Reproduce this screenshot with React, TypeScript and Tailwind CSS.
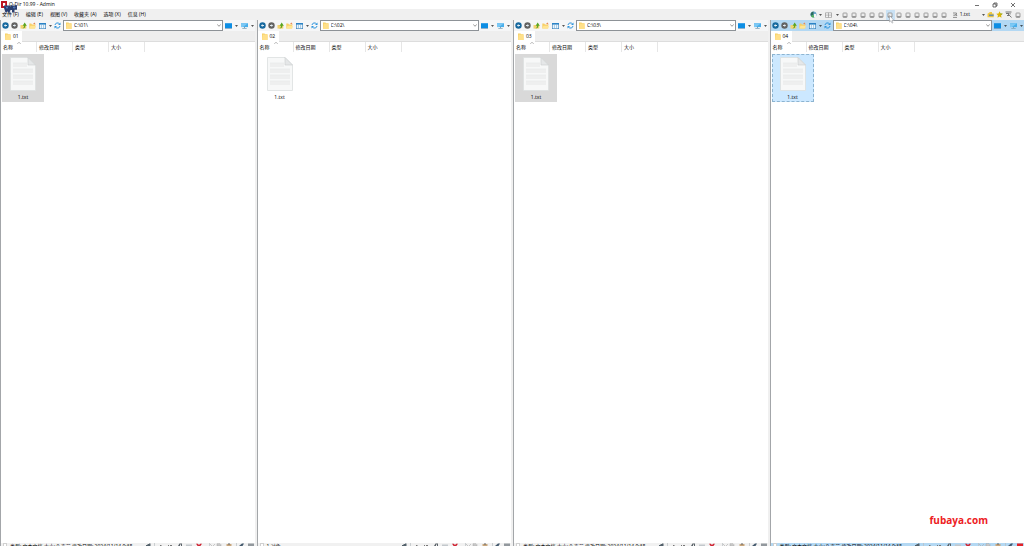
import React from "react";
import clsx from "clsx";

type PaneData = {
    name: string;
    selection: "inactive" | "none" | "active";
    status: string;
};

const panes: PaneData[] = [
    { name: "01", selection: "inactive", status: "类型: 文本文档 大小: 0 字节 修改日期: 2024/11/14 9:38" },
    { name: "02", selection: "none", status: "1 对象" },
    { name: "03", selection: "inactive", status: "类型: 文本文档 大小: 0 字节 修改日期: 2024/11/14 9:38" },
    { name: "04", selection: "active", status: "类型: 文本文档 大小: 0 字节 修改日期: 2024/11/14 9:38" },
];

const menus = ["文件 (F)", "编辑 (E)", "视图 (V)", "收藏夹 (A)", "选项 (X)", "信息 (H)"];

const Caret = () => (
    <svg viewBox="0 0 4 2" className="w-[3px] h-[2px] shrink-0">
        <path d="M0 0h4L2 2z" fill="#222" />
    </svg>
);

const Folder = ({ className }: { className?: string }) => (
    <svg viewBox="0 0 6 7" className={clsx("w-[6px] h-[7px] shrink-0", className)}>
        <path d="M0 0.5h2.5l.6.8H5.5V7H0z" fill="#f5cf62" />
        <path d="M.6 1.6H5.5V7H0z" fill="#ffe08a" />
    </svg>
);

const Arrow = ({ color, flip }: { color: string; flip?: boolean }) => (
    <svg viewBox="0 0 7 7" className={clsx("w-[7px] h-[7px]", flip && "-scale-x-100")}>
        <circle cx="3.5" cy="3.5" r="3.2" fill={color} />
        <path d="M1.9 3.5L3.6 2.1V3H5V4H3.6V4.9z" fill="#e2ecf3" />
    </svg>
);

const UpIcon = () => (
    <svg viewBox="0 0 7 7" className="w-[7px] h-[7px]">
        <path d="M.5 3h5.8v3.6H.5z" fill="#f3d370" />
        <path d="M2 6.2c1.7-.3 2-1 2-2.5H2.6L4.7.6l2.1 3.1H5.3c0 2-1 2.8-3.3 2.5z" fill="#5aa522" />
    </svg>
);

const FavIcon = () => (
    <svg viewBox="0 0 7 7" className="w-[7px] h-[7px]">
        <path d="M.3 1.6h2l.6.8h3.3v4H.3z" fill="#f8cf66" />
        <path d="M1.5 3.7H7L5.9 6.4H.3z" fill="#ffe594" />
        <path d="M4 1.8L5.7.6l.9 1.8z" fill="#e88a57" />
    </svg>
);

const ViewIcon = () => (
    <svg viewBox="0 0 7 6" className="w-[7px] h-[6px]">
        <rect x=".3" y=".3" width="6.4" height="5.4" fill="#f3f9fd" stroke="#2f7dbb" strokeWidth=".6" />
        <path d="M0 0h7v1.6H0z" fill="#2b83c6" />
        <path d="M2.4 1.5v4.2M4.6 1.5v4.2" stroke="#6ba7d3" strokeWidth=".6" />
    </svg>
);

const RefreshIcon = () => (
    <svg viewBox="0 0 7 7" className="w-[7px] h-[7px]">
        <path d="M1 3C1.3.7 4.2.3 5.5 1.8M6 4C5.7 6.3 2.8 6.7 1.5 5.2" fill="none" stroke="#2d94dc" strokeWidth="1" />
        <path d="M6.5.5v2.6H4zM.5 6.5V3.9H3z" fill="#2d94dc" />
    </svg>
);

const Monitor = ({ stand }: { stand?: boolean }) => (
    <svg viewBox="0 0 7 6" className="w-[7px] h-[6px]">
        <path d={stand ? "M0 .2h7v3.9H0z" : "M0 .2h7V5H0z"} fill={stand ? "#48aeea" : "#0d8ee4"} />
        {stand && <path d="M0 .2h7L2 4.1H0z" fill="#7cc8f4" />}
        <path d={stand ? "M1.3 5h4.4v.8H1.3zM3 4h1v1H3z" : "M0 5h7v.5H0z"} fill={stand ? "#7da2b8" : "#2a6fa4"} />
    </svg>
);

const TextFile = () => (
    <svg viewBox="0 0 26 34" className="w-[26px] h-[34px] shrink-0">
        <path d="M.5.5H18L25.5 8V33.5H.5z" fill="#f7f8f8" stroke="#dcdfe0" strokeWidth=".8" />
        <path d="M3 6h14v4H3zM3 12h20v4H3zM3 18h20v4H3zM3 24h20v4H3z" fill="#eeefef" />
        <path d="M3 6h14M3 12h20M3 18h20M3 24h20" stroke="#e6e8e8" strokeWidth=".6" />
        <path d="M18 .5V8h7.5z" fill="#e5e7e8" stroke="#c9cdce" strokeWidth=".6" />
    </svg>
);

const Disk = () => (
    <svg viewBox="0 0 6 6" className="w-[6px] h-[6px]">
        <rect x="1" y="1" width="4" height="4.4" rx=".6" fill="#ececec" stroke="#8b8b8b" strokeWidth=".8" />
        <path d="M1.2 4.2h3.6v1H1.2z" fill="#858585" />
    </svg>
);

const TopTools = () => (
    <div className="flex items-center text-[5px] pr-[2px]">
        <button aria-label="Colors" className="w-[10px] flex justify-center">
            <svg viewBox="0 0 7 7" className="w-[7px] h-[7px]">
                <circle cx="3.5" cy="3.5" r="3" fill="#6fa7cc" />
                <path d="M3.5 3.5V.5A3 3 0 0 0 1 5z" fill="#2a6a5d" />
                <path d="M3.5 3.5L1 5.2a3 3 0 0 0 3 1.3z" fill="#4db352" />
                <path d="M4 3h2v3H4z" fill="#f5f5f5" />
            </svg>
        </button>
        <Caret />
        <button aria-label="Layout" className="w-[14px] flex justify-center">
            <svg viewBox="0 0 7 6" className="w-[7px] h-[6px]">
                <path d="M.5.8h6v4.6h-6zM3.5.8v4.6M.5 3.1h6" fill="#fafafa" stroke="#858585" strokeWidth=".6" />
            </svg>
        </button>
        <Caret />
        <div className="flex pl-[2px]">
            {Array.from({ length: 12 }, (_, i) => (
                <button
                    key={i}
                    aria-label={`Drive ${i + 1}`}
                    className={clsx("relative w-[9px] h-[10px] flex items-center justify-center", i === 5 && "bg-[#c9e1f4]")}
                >
                    <Disk />
                    {i === 5 && (
                        <svg viewBox="0 0 6 9" className="absolute left-[3px] top-[5px] z-10 w-[6px] h-[9px]">
                            <path d="M.5.5V7L2 5.7l1 2.4 1-.5-1-2.2h2z" fill="#fff" stroke="#8b8f95" strokeWidth=".5" />
                        </svg>
                    )}
                </button>
            ))}
        </div>
        <button className="flex items-center gap-[2px] pl-[3px]">
            <svg viewBox="0 0 6 6" className="w-[6px] h-[6px]">
                <path d="M1 1h3.5v1.6H2.8V4M1 5.4h4M1.2 3.2h1M3.8 3.5h1.4" fill="none" stroke="#666" strokeWidth=".7" />
            </svg>
            1.txt
        </button>
        <span className="pl-[12px] pr-px">
            <Caret />
        </span>
        <button aria-label="Open folder" className="w-[9px] flex justify-center">
            <svg viewBox="0 0 7 7" className="w-[7px] h-[7px]">
                <path d="M.5 2.7L3 1h2v1.5h1.7v3.7H.5z" fill="#f0c83f" />
                <path d="M2 3.5h4.6v1.6H2z" fill="#698ea6" />
            </svg>
        </button>
        <button aria-label="Favorites" className="w-[9px] flex justify-center">
            <svg viewBox="0 0 7 7" className="w-[7px] h-[7px]">
                <path d="M3.5.3l1 2.1 2.3.3-1.7 1.6.4 2.4-2-1.2-2 1.2.4-2.4L.2 2.7l2.3-.3z" fill="#dfb500" />
                <path d="M3.5.3l1 2.1 2.3.3-2 1z" fill="#6da32e" />
            </svg>
        </button>
        <button aria-label="Tools" className="w-[9px] flex justify-center">
            <svg viewBox="0 0 7 7" className="w-[7px] h-[7px]">
                <path d="M.5 1h6M1 2.5h3M3 3l3.5 3.4M2 4.5h2M5 2v1.5" stroke="#555" strokeWidth=".8" />
            </svg>
        </button>
        <button aria-label="Window" className="w-[9px] flex justify-center">
            <Disk />
        </button>
    </div>
);

const StatusIcons = ({ active }: { active: boolean }) => (
    <svg viewBox="0 0 110 3" className="w-[110px] h-[3px] shrink-0">
        <path d="M1 2h1.5V1H4V.4h1.5V3H1z" fill="#53616b" />
        <path d="M9.5 0v3M64.5 0v3M91.5 0v3" stroke="#b9bec2" strokeWidth=".7" />
        <path d="M15 2h1.5v1H15zM23 2h1v1h-1zM25 2h2v1h-2z" fill="#777" />
        <path d="M33 3L34.5.6H37V3h-1V1.5h-1V3z" fill="#5c646a" />
        <path d="M41 1.5h6V3h-6z" fill="#c3c8cc" />
        <path d="M51 .7h1.8L54 2l1.2-1.3H57L55.4 3h-2.8z" fill="#cf2433" />
        <path d="M65 1l2 2M70 1l-2 2" stroke="#aaa" strokeWidth=".6" />
        <path d="M72 .7h3l1 1V3h-4z" fill="#ccc" stroke="#999" strokeWidth=".4" />
        <path d="M81.5 1h5v2h-5z" fill="#c8a67c" />
        <path d="M83 .5h2v1h-2z" fill="#666" />
        <path d="M94 3l3-2.5h2L97.5 3z" fill="#43596d" />
        <path d="M103 .5h6V3h-6z" fill={active ? "#e32227" : "#92989d"} />
    </svg>
);

const Pane = ({ pane }: { pane: PaneData }) => {
    const active = pane.selection === "active";

    return (
        <section className="flex flex-col min-w-0 min-h-0 bg-white border-l border-[#a3a6a9]">
            <div className={clsx("flex items-center h-[11px] shrink-0", active ? "bg-[#b3d8f3]" : "bg-[#f5f6f7]")}>
                <div className="flex items-center gap-[2px] w-[62px] pl-px shrink-0">
                    <button aria-label="Back"><Arrow color="#17699f" /></button>
                    <button aria-label="Forward"><Arrow color="#636363" flip /></button>
                    <button aria-label="Up"><UpIcon /></button>
                    <button aria-label="Favorites"><FavIcon /></button>
                    <button aria-label="View" className="flex items-center gap-[3px] pl-px">
                        <ViewIcon />
                        <Caret />
                    </button>
                    <button aria-label="Refresh"><RefreshIcon /></button>
                </div>
                <label className="flex items-center flex-1 min-w-0 h-[11px] pl-[2px] pr-px gap-[2px] bg-white border border-[#8d9297]">
                    <Folder />
                    <input
                        aria-label="Address"
                        defaultValue={`C:\\${pane.name}\\`}
                        className="flex-1 min-w-0 h-[9px] leading-[9px] text-[5px] outline-none"
                    />
                    <svg viewBox="0 0 4 3" className="w-[4px] h-[3px]">
                        <path d="M.3.4L2 2.3 3.7.4" fill="none" stroke="#555" strokeWidth=".6" />
                    </svg>
                </label>
                <div className="flex items-center gap-[3px] pl-[2px] pr-px">
                    <button aria-label="Desktop" className="flex items-center gap-[3px]"><Monitor /><Caret /></button>
                    <button aria-label="Computer" className="flex items-center gap-[3px]"><Monitor stand /><Caret /></button>
                </div>
            </div>

            <div className="h-[11px] shrink-0 flex bg-[#eeeeee] border-b border-[#dddddd]">
                <button className="flex items-center gap-[2px] h-[11px] w-[21px] pl-[4px] bg-white">
                    <Folder />
                    {pane.name}
                </button>
            </div>

            <div className="relative flex h-[10px] shrink-0 leading-[10px]">
                {["名称", "修改日期", "类型", "大小"].map((title) => (
                    <div key={title} className="w-[36px] pl-[2px] border-r border-[#e6e6e6] whitespace-nowrap">
                        {title}
                    </div>
                ))}
                <svg viewBox="0 0 4 2" className="absolute left-[16px] top-0 w-[4px] h-[2px]">
                    <path d="M.2 1.8L2 .3l1.8 1.5" fill="none" stroke="#777" strokeWidth=".5" />
                </svg>
            </div>

            <div className="flex-1 min-h-0 pt-[2px] pl-px">
                <button
                    className={clsx(
                        "flex flex-col items-center gap-[2px] w-[42px] h-[48px] pt-[2px] border",
                        pane.selection === "inactive" && "bg-[#d9d9d9] border-[#d9d9d9]",
                        pane.selection === "none" && "border-transparent",
                        active && "bg-[#cce8ff] border-dashed border-[#8db4d0]"
                    )}
                >
                    <TextFile />
                    <span className="leading-[9px]">1.txt</span>
                </button>
            </div>

            {/* only the top edge of the status bar stays inside the window */}
            <footer className={clsx("flex justify-between h-[3px] shrink-0 overflow-hidden", active ? "bg-[#b3d8f3]" : "bg-[#f1f1f1]")}>
                <div className="flex gap-[3px] pl-[2px]">
                    <span className="w-[4px] h-[5px] border border-[#d0d0d0] bg-white" />
                    <span className="leading-[7px] whitespace-nowrap">{pane.status}</span>
                </div>
                <StatusIcons active={active} />
            </footer>
        </section>
    );
};

export default function App() {
    return (
        <div className="relative flex flex-col h-screen overflow-hidden bg-white text-[5px] leading-[9px] text-black font-['Open_Sans','Noto_Sans_CJK_SC',sans-serif]">
            <header className="flex justify-between h-[9px] shrink-0">
                <div className="relative flex items-center gap-[2px] pl-px">
                    <svg viewBox="0 0 6 7" className="w-[6px] h-[7px]">
                        <path d="M0 0h6v7H0z" fill="#bd1622" />
                        <path d="M2 2h2.2v3H2z" fill="#fff" />
                    </svg>
                    <h1>Q-Dir 10.99 - Admin</h1>
                    <svg viewBox="0 0 14 8" className="absolute left-[4px] top-[5px] z-10 w-[14px] h-[8px]">
                        <path d="M0 .5h6l.7 1L7.4.5H13v4.3h-2.5V7.5H8V5H6.5L5.5 7.5H4L3.5 6 3 7.5H1.5L0 3z" fill="#2a3f70" />
                        <path d="M2 1.5l1 2 1-2M9.5 2h1.5v1H9.5z" fill="none" stroke="#5984c7" strokeWidth=".8" />
                    </svg>
                </div>
                <div className="flex items-center gap-[12px] pr-[8px]">
                    <button aria-label="Minimize">
                        <svg viewBox="0 0 6 6" className="w-[6px] h-[6px]"><path d="M1 3.5h4" stroke="#333" strokeWidth=".7" /></svg>
                    </button>
                    <button aria-label="Restore">
                        <svg viewBox="0 0 6 6" className="w-[6px] h-[6px]"><path d="M1 2h3v3H1zM2 2V1h3v3H4" fill="none" stroke="#333" strokeWidth=".7" /></svg>
                    </button>
                    <button aria-label="Close">
                        <svg viewBox="0 0 6 6" className="w-[6px] h-[6px]"><path d="M1 1l4 4M5 1L1 5" stroke="#333" strokeWidth=".7" /></svg>
                    </button>
                </div>
            </header>

            <div className="flex justify-between items-center h-[11px] shrink-0 bg-[#f0f0f0]">
                <nav className="flex gap-[7px] pl-[2px]">
                    {menus.map((menu) => (
                        <button key={menu} className="whitespace-nowrap">{menu}</button>
                    ))}
                </nav>
                <TopTools />
            </div>

            <main className="grid grid-cols-4 gap-[2px] flex-1 min-h-0 bg-[#f0f0f0]">
                {panes.map((pane) => (
                    <Pane key={pane.name} pane={pane} />
                ))}
            </main>

            <div className="absolute right-[36px] bottom-[19px] text-[10px] leading-[14px] font-bold text-[#ed1c24]">
                fubaya.com
            </div>
        </div>
    );
}
